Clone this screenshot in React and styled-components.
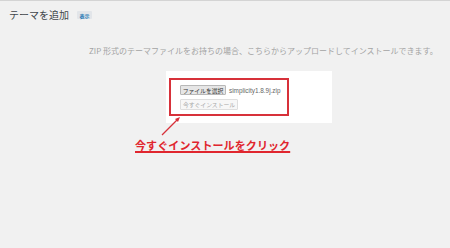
import styled, { createGlobalStyle } from 'styled-components';

const GlobalStyle = createGlobalStyle`
  html, body {
    margin: 0;
    padding: 0;
    background: #f1f1f1;
  }
  body {
    font-family: 'Liberation Sans', 'Noto Sans CJK JP', sans-serif;
  }
`;

const SPage = styled.div`
  position: relative;
  width: 450px;
  height: 248px;
  box-sizing: border-box;
  border-top: 1px solid #d4d4d4;
  overflow: hidden;
`;

const SHeader = styled.div`
  display: flex;
  align-items: center;
  gap: 8px;
  padding: 7px 0 0 9px;
`;

const STitle = styled.h1`
  margin: 0;
  font-family: 'Noto Sans CJK JP', sans-serif;
  font-size: 10px;
  line-height: 14px;
  font-weight: 400;
  color: #40454a;
`;

const SBadge = styled.span`
  display: inline-flex;
  align-items: center;
  justify-content: center;
  width: 15px;
  height: 8px;
  background: #e2e5e9;
  color: #2a7ab5;
  font-size: 5px;
  font-weight: 700;
  border-radius: 1px;
`;

const SDescription = styled.p`
  margin: 24px 0 0 89px;
  font-family: 'Noto Sans CJK JP', sans-serif;
  font-size: 8px;
  line-height: 10px;
  color: #a3a3a3;
  white-space: nowrap;
`;

const SCard = styled.div`
  margin: 15px 0 0 166px;
  width: 166px;
  height: 52px;
  box-sizing: border-box;
  padding: 7px 0 0 3px;
  background: #ffffff;
`;

const SHighlight = styled.div`
  width: 120px;
  height: 38px;
  box-sizing: border-box;
  border: 2px solid #d7313a;
  padding: 5px 0 0 9px;
  display: flex;
  flex-direction: column;
  gap: 4px;
`;

const SFileRow = styled.div`
  display: flex;
  align-items: center;
  gap: 3px;
  white-space: nowrap;
`;

const SButton = styled.span`
  display: inline-flex;
  align-items: center;
  justify-content: center;
  box-sizing: border-box;
  width: ${(p) => p.$width}px;
  height: ${(p) => (p.$disabled ? 11 : 10)}px;
  padding: 0;
  font-family: 'Noto Sans CJK JP', sans-serif;
  font-size: 5.8px;
  white-space: nowrap;
  overflow: hidden;
  color: ${(p) => (p.$disabled ? '#a8a8a8' : '#333')};
  background: ${(p) => (p.$disabled ? '#f7f7f7' : '#e6e6e6')};
  border: 1px solid ${(p) => (p.$disabled ? '#dedede' : '#b8b8b8')};
  border-radius: 1px;
`;

const SFileName = styled.span`
  font-size: 6.4px;
  color: #666;
`;

const SCallout = styled.div`
  margin: 16px 0 0 135px;
  font-family: 'Noto Sans CJK JP', sans-serif;
  font-size: 11px;
  line-height: 13px;
  font-weight: 700;
  color: #e0262e;
  text-decoration: underline;
  text-decoration-thickness: 1.5px;
  text-underline-offset: 1px;
  white-space: nowrap;
  letter-spacing: 0.1px;
`;

const SArrow = styled.svg`
  position: absolute;
  left: 158px;
  top: 113px;
  width: 26px;
  height: 24px;
`;

export default function App() {
  return (
    <>
      <GlobalStyle />
      <SPage>
        <SHeader>
          <STitle>テーマを追加</STitle>
          <SBadge>表示</SBadge>
        </SHeader>
        <SDescription>
          ZIP 形式のテーマファイルをお持ちの場合、こちらからアップロードしてインストールできます。
        </SDescription>
        <SCard>
          <SHighlight>
            <SFileRow>
              <SButton $width={46}>ファイルを選択</SButton>
              <SFileName>simplicity1.8.9j.zip</SFileName>
            </SFileRow>
            <SButton $width={58} $disabled>
              今すぐインストール
            </SButton>
          </SHighlight>
        </SCard>
        <SCallout>今すぐインストールをクリック</SCallout>
        <SArrow viewBox="0 0 26 24">
          <line x1="4" y1="21" x2="20" y2="5" stroke="#d7313a" strokeWidth="1.3" />
          <polygon points="22,3 17,5 20,8" fill="#d7313a" />
        </SArrow>
      </SPage>
    </>
  );
}
